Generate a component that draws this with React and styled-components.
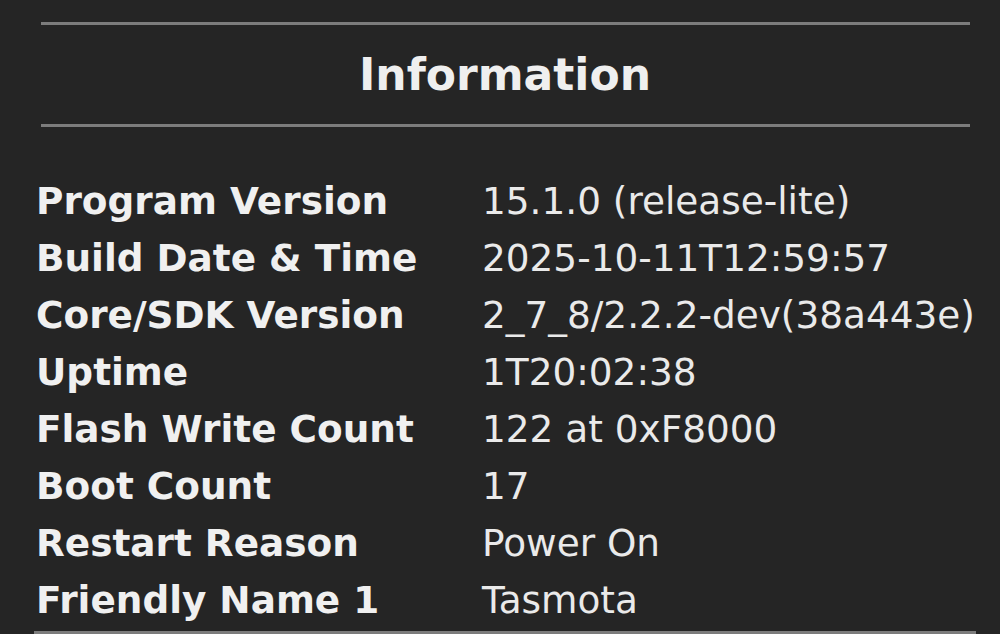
import React from 'react';
import styled, { createGlobalStyle } from 'styled-components';

const GlobalStyle = createGlobalStyle`
  html, body {
    margin: 0;
    padding: 0;
    background: #252525;
  }
  body {
    font-family: "DejaVu Sans", "Liberation Sans", sans-serif;
    color: #eaeaea;
    overflow: hidden;
  }
`;

const Page = styled.div`
  width: 942px;
  margin-left: 34px;
  padding-top: 22px;
`;

const Rule = styled.div`
  height: 3px;
  background: #7c7c7c;
  margin: 0 6px 0 7px;
`;

const Title = styled.h2`
  margin: 0;
  height: 99px;
  line-height: 99px;
  text-align: center;
  font-size: 44px;
  font-weight: bold;
  color: #efefef;
`;

const InfoTable = styled.div`
  display: grid;
  grid-template-columns: 446px 1fr;
  grid-auto-rows: 57px;
  margin: 46px 0 2px 2px;
  font-size: 37.4px;
  line-height: 57px;
  white-space: nowrap;
`;

const Label = styled.div`
  font-weight: bold;
  color: #f0f0f0;
`;

const Value = styled.div`
  color: #eaeaea;
`;

const BottomBar = styled.div`
  height: 4px;
  background: #7c7c7c;
`;

const rows = [
  ['Program Version', '15.1.0 (release-lite)'],
  ['Build Date & Time', '2025-10-11T12:59:57'],
  ['Core/SDK Version', '2_7_8/2.2.2-dev(38a443e)'],
  ['Uptime', '1T20:02:38'],
  ['Flash Write Count', '122 at 0xF8000'],
  ['Boot Count', '17'],
  ['Restart Reason', 'Power On'],
  ['Friendly Name 1', 'Tasmota'],
];

const App = () => {
  return (
    <>
      <GlobalStyle />
      <Page>
        <Rule />
        <Title>Information</Title>
        <Rule />
        <InfoTable>
          {rows.map(([label, value]) => (
            <React.Fragment key={label}>
              <Label>{label}</Label>
              <Value>{value}</Value>
            </React.Fragment>
          ))}
        </InfoTable>
        <BottomBar />
      </Page>
    </>
  );
};

export default App;
